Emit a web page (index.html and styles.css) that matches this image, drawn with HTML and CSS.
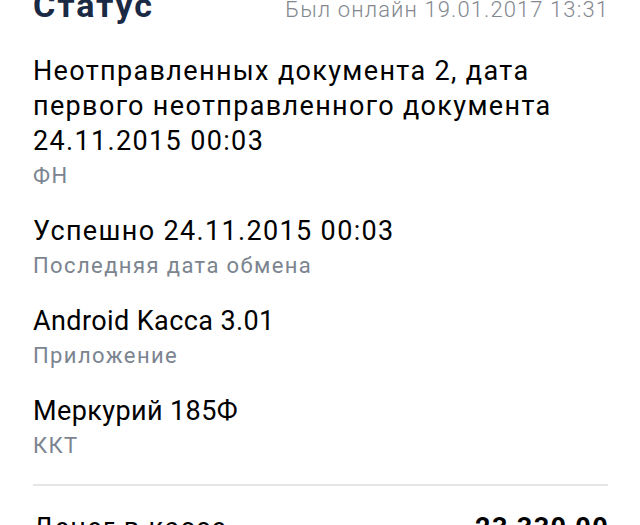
FILE: index.html
```html
<!DOCTYPE html>
<html lang="ru">
<head>
<meta charset="utf-8">
<link rel="stylesheet" href="styles.css">
</head>
<body>
<div class="page">
  <header class="head">
    <h1 class="title">Статус</h1>
    <span class="online">Был онлайн 19.01.2017 13:31</span>
  </header>
  <ul class="list">
    <li class="item">
      <div class="value">Неотправленных документа 2, дата первого неотправленного документа 24.11.2015 00:03</div>
      <div class="label">ФН</div>
    </li>
    <li class="item">
      <div class="value">Успешно 24.11.2015 00:03</div>
      <div class="label">Последняя дата обмена</div>
    </li>
    <li class="item">
      <div class="value value-tight">Android Kacca 3.01</div>
      <div class="label">Приложение</div>
    </li>
    <li class="item">
      <div class="value value-tight">Меркурий 185Ф</div>
      <div class="label">ККТ</div>
    </li>
  </ul>
  <div class="divider"></div>
  <div class="total">
    <span class="total-label">Денег в кассе</span>
    <span class="total-value">23 330,00</span>
  </div>
</div>
</body>
</html>
```
FILE: styles.css
```css
html, body {
  margin: 0;
  padding: 0;
  background: #ffffff;
}
body {
  font-family: Roboto, "Noto Sans", sans-serif;
  color: #000000;
  overflow: hidden;
}
.page {
  width: 575px;
  margin-left: 33px;
}
.head {
  display: flex;
  justify-content: space-between;
  align-items: baseline;
  margin-top: -15px;
}
.title {
  margin: 0;
  font-size: 34px;
  line-height: 40px;
  font-weight: 700;
  letter-spacing: 1.9px;
  color: #1b2a44;
}
.online {
  font-size: 22px;
  font-weight: 300;
  letter-spacing: 1.1px;
  margin-right: -1px;
  color: #83888f;
}
.list {
  list-style: none;
  margin: 29px 0 0;
  padding: 0;
}
.item {
  margin-bottom: 23px;
}
.item:last-child {
  margin-bottom: 0;
}
.value {
  font-size: 27px;
  line-height: 35px;
  letter-spacing: 1.35px;
}
.value-tight {
  letter-spacing: 0.4px;
}
.label {
  margin-top: 2px;
  font-size: 22px;
  line-height: 30px;
  letter-spacing: 1.4px;
  color: #7b848f;
}
.divider {
  height: 2px;
  background: #e6e6e6;
  margin-top: 23px;
}
.total {
  display: flex;
  justify-content: space-between;
  margin-top: 25px;
  font-size: 27px;
  line-height: 35px;
  letter-spacing: 1.35px;
}
.total-value {
  font-weight: 700;
  margin-right: -1px;
}
```
